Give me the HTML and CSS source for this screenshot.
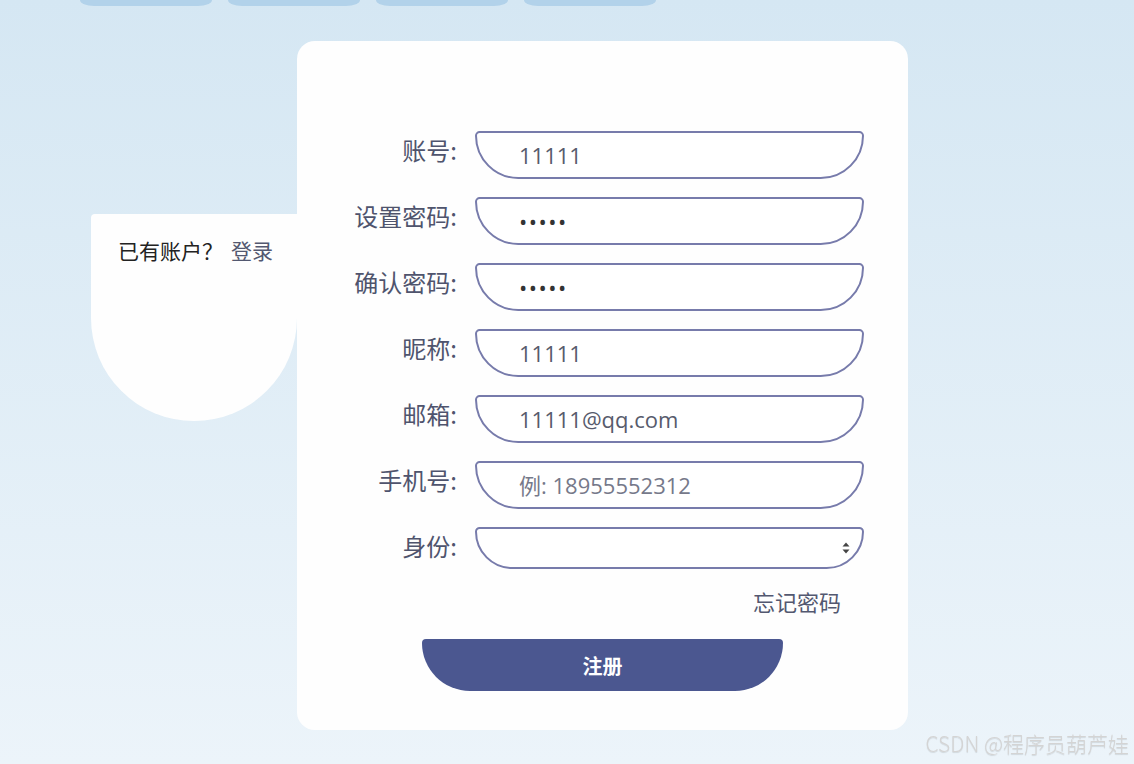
FILE: index.html
```html
<!DOCTYPE html>
<html lang="zh-CN">
<head>
  <meta charset="UTF-8" />
  <meta name="viewport" content="width=device-width, initial-scale=1.0"/>
  <title>注册</title>
  <link rel="stylesheet" href="styles.css">
</head>
<body>
  <div class="tabs">
    <span class="tab"></span>
    <span class="tab"></span>
    <span class="tab"></span>
    <span class="tab"></span>
  </div>

  <div class="page">
    <div class="side">
      <p class="tip">已有账户？<a href="#" class="link">登录</a></p>
    </div>

    <form class="card">
      <div class="row">
        <label class="label">账号:</label>
        <input class="field" type="text" value="11111">
      </div>
      <div class="row">
        <label class="label">设置密码:</label>
        <input class="field" type="password" value="11111">
      </div>
      <div class="row">
        <label class="label">确认密码:</label>
        <input class="field" type="password" value="11111">
      </div>
      <div class="row">
        <label class="label">昵称:</label>
        <input class="field" type="text" value="11111">
      </div>
      <div class="row">
        <label class="label">邮箱:</label>
        <input class="field" type="text" value="11111@qq.com">
      </div>
      <div class="row">
        <label class="label">手机号:</label>
        <input class="field" type="text" placeholder="例: 18955552312">
      </div>
      <div class="row">
        <label class="label">身份:</label>
        <div class="select-wrap">
          <select class="field select">
            <option></option>
            <option>学生</option>
            <option>教师</option>
          </select>
          <svg class="arrows" width="8" height="12" viewBox="0 0 8 12">
            <path d="M4 0.5 L7.5 4.5 H0.5 Z M4 11.5 L7.5 7.5 H0.5 Z" fill="#444"/>
          </svg>
        </div>
      </div>

      <div class="forgot"><a href="#" class="link">忘记密码</a></div>

      <button type="button" class="boton">注册</button>
    </form>
  </div>

  <div class="mark">CSDN @程序员葫芦娃</div>
</body>
</html>
```

FILE: styles.css
```css
body {
  margin: 0;
  min-height: 100vh;
  font-family: "Open Sans", "Noto Sans CJK SC", sans-serif;
  background: linear-gradient(to bottom, #d5e7f3, #ecf4fa);
}

.tabs {
  display: flex;
  gap: 16px;
  padding-left: 80px;
  height: 6px;
}

.tab {
  width: 132px;
  height: 6px;
  background-color: #b2d2ea;
  border-radius: 0 0 14px 14px / 0 0 6px 6px;
}

.page {
  display: flex;
  align-items: flex-start;
  padding-left: 91px;
  margin-top: 35px;
}

.side {
  box-sizing: border-box;
  width: 206px;
  height: 207px;
  margin-top: 173px;
  padding: 21px 0 0 27px;
  background-color: #fefefe;
  border-radius: 4px 0 103px 103px;
}

.tip {
  margin: 0;
  font-family: "Noto Sans CJK SC", sans-serif;
  font-size: 21px;
  line-height: 30px;
  color: #222;
}

.link {
  color: #535870;
  text-decoration: none;
}

.tip .link {
  margin-left: 8px;
}

.card {
  box-sizing: border-box;
  width: 611px;
  height: 689px;
  padding-top: 90px;
  margin: 0;
  background-color: #fefefe;
  border-radius: 18px;
}

.row {
  display: flex;
  align-items: flex-start;
  margin-bottom: 18px;
}

.label {
  width: 160px;
  margin-right: 18px;
  text-align: right;
  font-family: "Noto Sans CJK SC", sans-serif;
  font-size: 24px;
  line-height: 38px;
  color: #4f546d;
}

.field {
  box-sizing: border-box;
  width: 389px;
  height: 48px;
  padding: 0 0 0 42px;
  border: 2px solid #777bab;
  border-radius: 5px 5px 46px 46px / 5px 5px 46px 46px;
  background-color: #fff;
  font-family: "Open Sans", "Noto Sans CJK SC", sans-serif;
  font-size: 22px;
  color: #575b6c;
  outline: none;
}

.field[type="password"] {
  letter-spacing: 1.5px;
  color: #333;
}

.field::placeholder {
  color: #76798a;
}

.select-wrap {
  position: relative;
}

.select {
  height: 42px;
  appearance: none;
  border-radius: 5px 5px 40px 40px / 5px 5px 40px 40px;
}

.arrows {
  position: absolute;
  right: 14px;
  top: 15px;
  pointer-events: none;
}

.forgot {
  padding-right: 67px;
  text-align: right;
  font-family: "Noto Sans CJK SC", sans-serif;
  font-size: 22px;
  line-height: 28px;
}

.boton {
  display: block;
  width: 361px;
  height: 52px;
  margin: 24px auto 0;
  border: none;
  border-radius: 4px 4px 48px 48px / 4px 4px 48px 48px;
  background-color: #4b5790;
  color: #fff;
  font-family: "Noto Sans CJK SC", sans-serif;
  font-size: 20px;
  font-weight: bold;
  cursor: pointer;
}

.mark {
  position: fixed;
  right: 5px;
  bottom: 6px;
  font-family: "Noto Sans CJK SC", sans-serif;
  font-size: 21px;
  font-weight: 300;
  color: #d4d4d4;
  text-shadow: 0 1px 1px rgba(0, 0, 0, 0.12);
}
```
